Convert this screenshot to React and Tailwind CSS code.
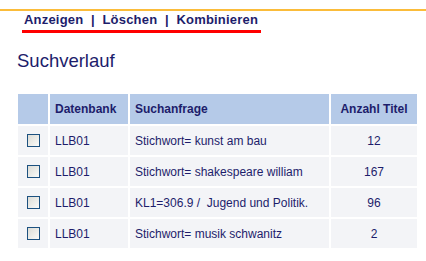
const rows = [
  { db: 'LLB01', query: 'Stichwort= kunst am bau', count: '12' },
  { db: 'LLB01', query: 'Stichwort= shakespeare william', count: '167' },
  { db: 'LLB01', query: 'KL1=306.9 /  Jugend und Politik.', count: '96' },
  { db: 'LLB01', query: 'Stichwort= musik schwanitz', count: '2' },
]

function Checkbox() {
  return (
    <span className="inline-block h-[13px] w-[13px] border border-[#1c5180] bg-gradient-to-br from-[#dcdcd6] to-[#fbfbf9]" />
  )
}

export default function App() {
  return (
    <div className="h-[261px] w-[426px] bg-white font-['Liberation_Sans',Arial,sans-serif] text-[#1d1d6b]">
      <div className="h-[9px]" />
      <div className="h-[2px] bg-[#fbbc3a]" />
      <div className="flex pl-[22px] pt-[1px]">
        <div className="whitespace-pre border-b-[3px] border-[#ff0000] pb-[3px] pl-[2px] pr-[3px] text-[13px] font-bold leading-[15px] tracking-[0.2px]">
          Anzeigen  |  Löschen  |  Kombinieren
        </div>
      </div>
      <h1 className="pl-[17px] pt-[17px] text-[18.5px] leading-[22px]">Suchverlauf</h1>
      <table className="ml-[16px] mt-[20px] border-separate border-spacing-[2px] text-[12px]">
        <thead>
          <tr className="bg-[#b5cae8] font-bold">
            <th className="h-[30px] w-[30px]" />
            <th className="w-[78px] px-[5px] text-left">Datenbank</th>
            <th className="w-[199px] px-[5px] text-left">Suchanfrage</th>
            <th className="w-[86px] text-center">Anzahl Titel</th>
          </tr>
        </thead>
        <tbody>
          {rows.map((r, i) => (
            <tr key={i} className="bg-[#f3f4f7]">
              <td className="h-[29px] text-center align-middle">
                <span className="flex justify-center pl-[1px]">
                  <Checkbox />
                </span>
              </td>
              <td className="px-[5px]">{r.db}</td>
              <td className="whitespace-pre px-[5px]">{r.query}</td>
              <td className="text-center">{r.count}</td>
            </tr>
          ))}
        </tbody>
      </table>
    </div>
  )
}
